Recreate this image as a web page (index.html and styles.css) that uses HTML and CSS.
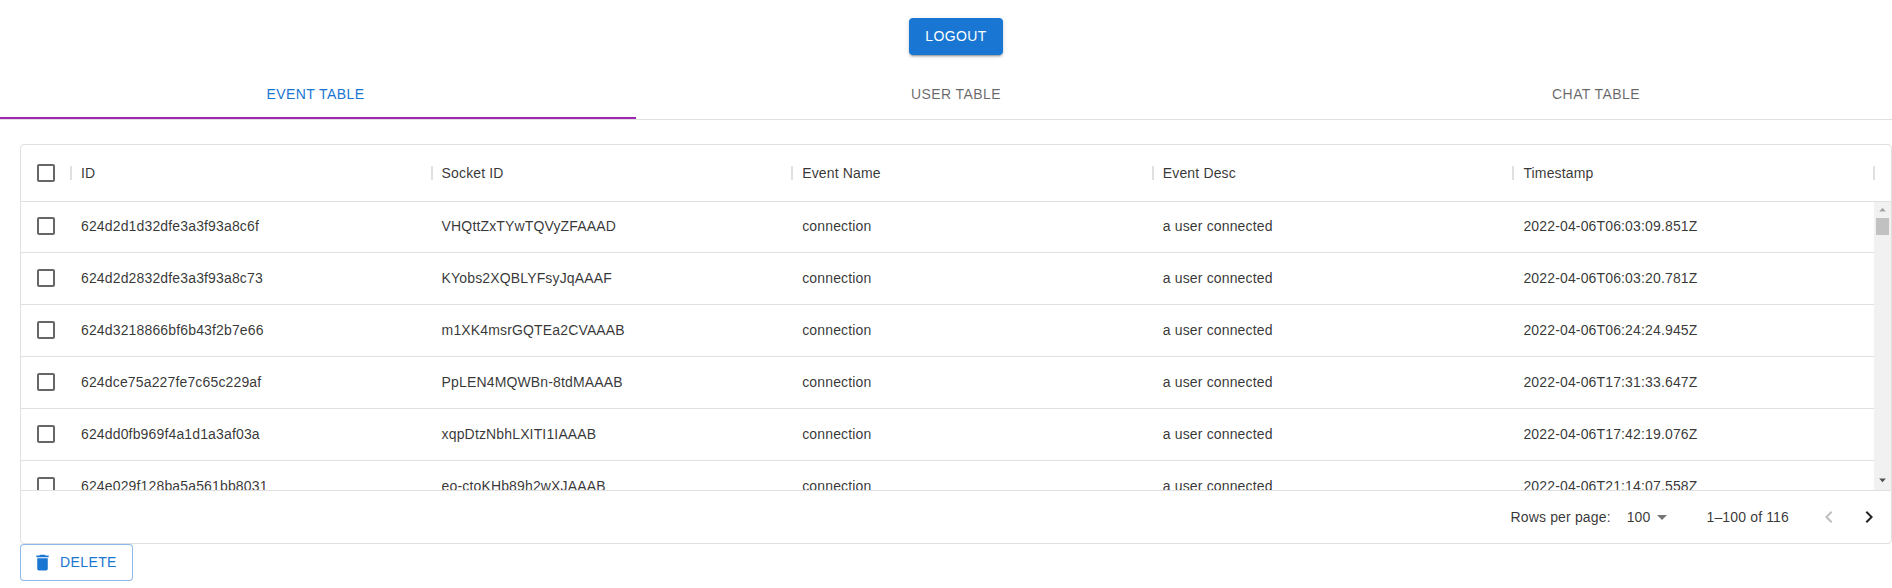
FILE: index.html
```html
<!DOCTYPE html>
<html lang="en">
<head>
  <meta charset="UTF-8">
  <meta name="viewport" content="width=device-width, initial-scale=1.0">
  <title>Admin Tables</title>
  <link rel="stylesheet" href="styles.css">
</head>
<body>
  <div class="top-bar">
    <button class="logout-btn">LOGOUT</button>
  </div>

  <div class="tabs">
    <div class="tab tab-active">EVENT TABLE</div>
    <div class="tab">USER TABLE</div>
    <div class="tab">CHAT TABLE</div>
  </div>

  <div class="content">
    <div class="grid-card">
      <div class="grid-header">
        <div class="row header-row">
          <div class="cell check-cell">
            <svg class="check-icon" viewBox="0 0 24 24"><path d="M19 5v14H5V5h14m0-2H5c-1.1 0-2 .9-2 2v14c0 1.1.9 2 2 2h14c1.1 0 2-.9 2-2V5c0-1.1-.9-2-2-2z"/></svg>
            <span class="sep"></span>
          </div>
          <div class="cell">ID<span class="sep"></span></div>
          <div class="cell">Socket ID<span class="sep"></span></div>
          <div class="cell">Event Name<span class="sep"></span></div>
          <div class="cell">Event Desc<span class="sep"></span></div>
          <div class="cell">Timestamp<span class="sep"></span></div>
        </div>
      </div>

      <div class="grid-body">
        <div class="rows">
          <div class="row body-row">
            <div class="cell check-cell"><svg class="check-icon" viewBox="0 0 24 24"><path d="M19 5v14H5V5h14m0-2H5c-1.1 0-2 .9-2 2v14c0 1.1.9 2 2 2h14c1.1 0 2-.9 2-2V5c0-1.1-.9-2-2-2z"/></svg></div>
            <div class="cell">624d2d1d32dfe3a3f93a8c6f</div>
            <div class="cell">VHQttZxTYwTQVyZFAAAD</div>
            <div class="cell">connection</div>
            <div class="cell">a user connected</div>
            <div class="cell">2022-04-06T06:03:09.851Z</div>
          </div>
          <div class="row body-row">
            <div class="cell check-cell"><svg class="check-icon" viewBox="0 0 24 24"><path d="M19 5v14H5V5h14m0-2H5c-1.1 0-2 .9-2 2v14c0 1.1.9 2 2 2h14c1.1 0 2-.9 2-2V5c0-1.1-.9-2-2-2z"/></svg></div>
            <div class="cell">624d2d2832dfe3a3f93a8c73</div>
            <div class="cell">KYobs2XQBLYFsyJqAAAF</div>
            <div class="cell">connection</div>
            <div class="cell">a user connected</div>
            <div class="cell">2022-04-06T06:03:20.781Z</div>
          </div>
          <div class="row body-row">
            <div class="cell check-cell"><svg class="check-icon" viewBox="0 0 24 24"><path d="M19 5v14H5V5h14m0-2H5c-1.1 0-2 .9-2 2v14c0 1.1.9 2 2 2h14c1.1 0 2-.9 2-2V5c0-1.1-.9-2-2-2z"/></svg></div>
            <div class="cell">624d3218866bf6b43f2b7e66</div>
            <div class="cell">m1XK4msrGQTEa2CVAAAB</div>
            <div class="cell">connection</div>
            <div class="cell">a user connected</div>
            <div class="cell">2022-04-06T06:24:24.945Z</div>
          </div>
          <div class="row body-row">
            <div class="cell check-cell"><svg class="check-icon" viewBox="0 0 24 24"><path d="M19 5v14H5V5h14m0-2H5c-1.1 0-2 .9-2 2v14c0 1.1.9 2 2 2h14c1.1 0 2-.9 2-2V5c0-1.1-.9-2-2-2z"/></svg></div>
            <div class="cell">624dce75a227fe7c65c229af</div>
            <div class="cell">PpLEN4MQWBn-8tdMAAAB</div>
            <div class="cell">connection</div>
            <div class="cell">a user connected</div>
            <div class="cell">2022-04-06T17:31:33.647Z</div>
          </div>
          <div class="row body-row">
            <div class="cell check-cell"><svg class="check-icon" viewBox="0 0 24 24"><path d="M19 5v14H5V5h14m0-2H5c-1.1 0-2 .9-2 2v14c0 1.1.9 2 2 2h14c1.1 0 2-.9 2-2V5c0-1.1-.9-2-2-2z"/></svg></div>
            <div class="cell">624dd0fb969f4a1d1a3af03a</div>
            <div class="cell">xqpDtzNbhLXITI1IAAAB</div>
            <div class="cell">connection</div>
            <div class="cell">a user connected</div>
            <div class="cell">2022-04-06T17:42:19.076Z</div>
          </div>
          <div class="row body-row">
            <div class="cell check-cell"><svg class="check-icon" viewBox="0 0 24 24"><path d="M19 5v14H5V5h14m0-2H5c-1.1 0-2 .9-2 2v14c0 1.1.9 2 2 2h14c1.1 0 2-.9 2-2V5c0-1.1-.9-2-2-2z"/></svg></div>
            <div class="cell">624e029f128ba5a561bb8031</div>
            <div class="cell">eo-ctoKHb89h2wXJAAAB</div>
            <div class="cell">connection</div>
            <div class="cell">a user connected</div>
            <div class="cell">2022-04-06T21:14:07.558Z</div>
          </div>
        </div>
        <div class="scrollbar">
          <svg class="scroll-arrow" viewBox="0 0 17 17"><path d="M8.5 6 12 10H5z"/></svg>
          <div class="scroll-thumb"></div>
          <svg class="scroll-arrow scroll-arrow-down" viewBox="0 0 17 17"><path d="M5 7h7l-3.5 4z"/></svg>
        </div>
      </div>

      <div class="grid-footer">
        <span class="rows-label">Rows per page:</span>
        <span class="rows-select">100
          <svg class="select-icon" viewBox="0 0 24 24"><path d="M7 10l5 5 5-5z"/></svg>
        </span>
        <span class="rows-range">1–100 of 116</span>
        <span class="page-btn page-btn-off"><svg viewBox="0 0 24 24"><path d="M15.41 7.41 14 6l-6 6 6 6 1.41-1.41L10.83 12z"/></svg></span>
        <span class="page-btn"><svg viewBox="0 0 24 24"><path d="M10 6 8.59 7.41 13.17 12l-4.58 4.59L10 18l6-6z"/></svg></span>
      </div>
    </div>

    <button class="delete-btn">
      <svg viewBox="0 0 24 24"><path d="M6 19c0 1.1.9 2 2 2h8c1.1 0 2-.9 2-2V7H6v12zM19 4h-3.5l-1-1h-5l-1 1H5v2h14V4z"/></svg>
      DELETE
    </button>
  </div>
</body>
</html>
```

FILE: styles.css
```css
* {
  box-sizing: border-box;
}
body {
  font-family: "Liberation Sans", Arial, sans-serif;
  font-size: 14px;
  letter-spacing: 0.15px;
  color: rgba(0, 0, 0, 0.8);
  margin: 0;
  padding: 0;
  background-color: white;
  overflow: hidden;
}
button {
  font-family: inherit;
}

.top-bar {
  display: flex;
  justify-content: center;
  padding: 18px 0 0 20px;
  height: 71px;
}
.logout-btn {
  width: 94px;
  height: 36.5px;
  padding: 0 0 1px;
  border: none;
  border-radius: 4px;
  background-color: #1976d2;
  color: white;
  font-size: 14px;
  letter-spacing: 0.4px;
  box-shadow: 0 3px 1px -2px rgba(0, 0, 0, 0.2), 0 2px 2px 0 rgba(0, 0, 0, 0.14), 0 1px 5px 0 rgba(0, 0, 0, 0.12);
}

.tabs {
  display: grid;
  grid-template-columns: 636px 640px 640px;
  height: 49px;
  border-bottom: 1px solid #e0e0e0;
  overflow: hidden;
}
.tab {
  height: 48px;
  display: flex;
  align-items: center;
  justify-content: center;
  border-bottom: 2px solid transparent;
  color: rgba(0, 0, 0, 0.6);
  letter-spacing: 0.4px;
}
.tab-active {
  padding-right: 5px;
  color: #1976d2;
  border-bottom-color: #9c27b0;
}

.content {
  padding: 24px 0 0 20px;
}
.grid-card {
  height: 400px;
  border: 1px solid #e0e0e0;
  border-radius: 4px;
  display: flex;
  flex-direction: column;
}
.grid-header {
  height: 57px;
  flex: none;
  border-bottom: 1px solid #e0e0e0;
}
.row {
  width: 1853px;
  display: grid;
  grid-template-columns: 50px repeat(5, 1fr);
}
.header-row {
  height: 56px;
}
.body-row {
  width: auto;
  height: 52px;
  padding-bottom: 1px;
  border-bottom: 1px solid #e0e0e0;
}
.cell {
  display: flex;
  align-items: center;
  justify-content: space-between;
  padding-left: 10px;
  white-space: nowrap;
  overflow: hidden;
}
.header-row .cell {
  overflow: visible;
}
.check-cell {
  padding-left: 13px;
}
.check-icon {
  width: 24px;
  height: 24px;
  flex: none;
  fill: rgba(0, 0, 0, 0.6);
}
.sep {
  width: 2px;
  height: 14px;
  flex: none;
  margin-right: -1px;
  background-color: #e0e0e0;
}

.grid-body {
  flex: 1;
  display: flex;
  min-height: 0;
  overflow: hidden;
}
.rows {
  flex: 1;
  margin-top: -1px;
}
.scrollbar {
  width: 17px;
  flex: none;
  background-color: #f1f1f1;
  display: flex;
  flex-direction: column;
}
.scroll-arrow {
  width: 17px;
  height: 16px;
  flex: none;
  fill: #a3a3a3;
}
.scroll-arrow-down {
  margin-top: auto;
  margin-bottom: 2px;
  fill: #505050;
}
.scroll-thumb {
  width: 13px;
  height: 17px;
  margin-left: 2px;
  background-color: #c1c1c1;
}

.grid-footer {
  height: 53px;
  flex: none;
  border-top: 1px solid #e0e0e0;
  padding-right: 2px;
  display: flex;
  align-items: center;
  justify-content: flex-end;
}
.rows-select {
  display: flex;
  align-items: center;
  margin-left: 16px;
  margin-right: 32px;
}
.select-icon {
  width: 24px;
  height: 24px;
  fill: rgba(0, 0, 0, 0.54);
}
.rows-range {
  margin-right: 20px;
}
.page-btn {
  width: 40px;
  height: 40px;
  padding: 8px;
}
.page-btn svg {
  display: block;
  fill: rgba(0, 0, 0, 0.87);
}
.page-btn-off svg {
  fill: rgba(0, 0, 0, 0.26);
}

.delete-btn {
  display: flex;
  align-items: center;
  width: 113px;
  height: 36.5px;
  padding: 0 0 0 10.5px;
  border: 1px solid rgba(25, 118, 210, 0.5);
  border-radius: 4px;
  background-color: white;
  color: #1976d2;
  font-size: 14px;
  letter-spacing: 0.4px;
}
.delete-btn svg {
  width: 21px;
  height: 21px;
  margin-right: 7.5px;
  fill: #1976d2;
}
```
